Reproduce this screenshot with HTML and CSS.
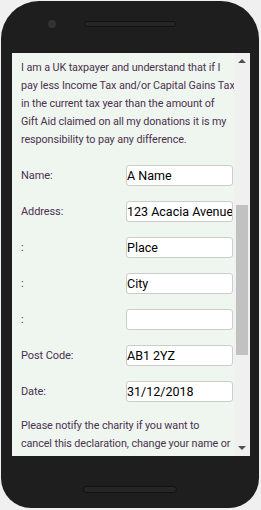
FILE: index.html
```html
<!doctype html>
<html><head><meta charset="UTF-8"><link rel="stylesheet" href="styles.css"></head>
<body>
  <div class="phone">
    <div class="haut"><div class="camera"></div><div class="hautparleur"></div></div>
    <div class="ecran">
      <div class="contenu">
        <p>I am a UK taxpayer and understand that if I<br>pay less Income Tax and/or Capital Gains Tax<br>in the current tax year than the amount of<br>Gift Aid claimed on all my donations it is my<br>responsibility to pay any difference.</p>
        <div class="ligne"><label for="nom">Name:</label><input type="text" id="nom" value="A Name"></div>
        <div class="ligne"><label for="adr1">Address:</label><input type="text" id="adr1" value="123 Acacia Avenue"></div>
        <div class="ligne"><label for="adr2">:</label><input type="text" id="adr2" value="Place"></div>
        <div class="ligne"><label for="adr3">:</label><input type="text" id="adr3" value="City"></div>
        <div class="ligne"><label for="adr4">:</label><input type="text" id="adr4" value=""></div>
        <div class="ligne"><label for="cp">Post Code:</label><input type="text" id="cp" value="AB1 2YZ"></div>
        <div class="ligne"><label for="date">Date:</label><input type="text" id="date" value="31/12/2018"></div>
        <p>Please notify the charity if you want to<br>cancel this declaration, change your name or<br>home address, or no longer pay sufficient tax.</p>
      </div>
      <div class="barre">
        <div class="fleche haut-f"></div>
        <div class="piste"><div class="curseur"></div></div>
        <div class="fleche bas-f"></div>
      </div>
    </div>
    <div class="bas"><div class="bouton"></div></div>
  </div>
</body></html>
```
FILE: styles.css
```css
* {box-sizing: border-box;}
body {margin:0;background:#f0f0f0;font-family:Roboto,sans-serif;}
.phone {width:258px;height:507px;margin:1px 0 0 1px;background:#1e1e1e;border-radius:38px 38px 30px 30px;display:flex;flex-direction:column;}
.haut {height:52px;display:flex;align-items:flex-start;gap:28px;padding:19px 0 0 47px;}
.camera {width:8px;height:8px;border-radius:50%;background:#333;}
.hautparleur {width:92px;height:6px;margin-top:1px;border-radius:3px;background:#262626;border:1px solid #111;}
.ecran {width:238px;height:403px;display:flex;overflow:hidden;margin-left:11px;}
.contenu {width:222px;height:403px;overflow:hidden;background:#eff6ef;padding:6px 0 0 9px;color:#4b3150;font-size:10.8px;letter-spacing:-0.1px;line-height:18px;white-space:nowrap;}
.contenu p {margin:0 0 16px 0;}
.ligne {display:flex;align-items:center;height:21px;margin-bottom:15px;}
label {width:105px;font-size:11px;}
input {width:107px;height:21px;margin:0;padding:0;border:1px solid #ccc;border-radius:3px;background:#fff;color:#000;font-family:Roboto,sans-serif;font-size:12.5px;}
.barre {width:16px;height:403px;background:#f0f0f0;display:flex;flex-direction:column;}
.fleche {height:16px;display:flex;justify-content:center;align-items:center;}
.haut-f::before {content:"";border-left:4px solid transparent;border-right:4px solid transparent;border-bottom:4px solid #505050;}
.bas-f::before {content:"";border-left:4px solid transparent;border-right:4px solid transparent;border-top:4px solid #505050;}
.piste {flex:1;padding:136px 2px 0 2px;}
.curseur {height:150px;background:#c1c1c1;}
.bas {flex:1;display:flex;justify-content:center;padding-top:30px;}
.bouton {width:94px;height:7px;border-radius:4px;background:#262626;border:1px solid #111;}
```
